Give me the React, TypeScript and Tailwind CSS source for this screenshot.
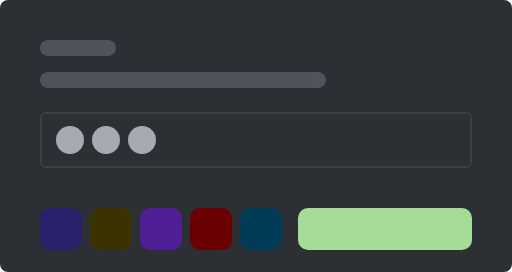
export default function App() {
  const swatches = ["bg-[#28216b]", "bg-[#3a3300]", "bg-[#4f1e96]", "bg-[#6b0000]", "bg-[#003b57]"];
  return (
    <div className="w-[512px] h-[272px] bg-white">
      <div className="w-full h-full bg-[#2c2f33] rounded-lg px-10 pt-10 flex flex-col">
        <div className="w-[76px] h-4 rounded-full bg-[#50535b]" />
        <div className="w-[286px] h-4 rounded-full bg-[#50535b] mt-4" />
        <div className="mt-6 h-14 rounded-md border-2 border-[#3c3f45] flex items-center pl-[14px] gap-2">
          <div className="w-7 h-7 rounded-full bg-[#a8aab2]" />
          <div className="w-7 h-7 rounded-full bg-[#a8aab2]" />
          <div className="w-7 h-7 rounded-full bg-[#a8aab2]" />
        </div>
        <div className="mt-10 flex items-center">
          <div className="flex gap-2">
            {swatches.map((c) => (
              <div key={c} className={`w-[42px] h-[42px] rounded-[10px] ${c}`} />
            ))}
          </div>
          <div className="ml-4 flex-1 h-[42px] rounded-[10px] bg-[#a4dc98]" />
        </div>
      </div>
    </div>
  );
}
